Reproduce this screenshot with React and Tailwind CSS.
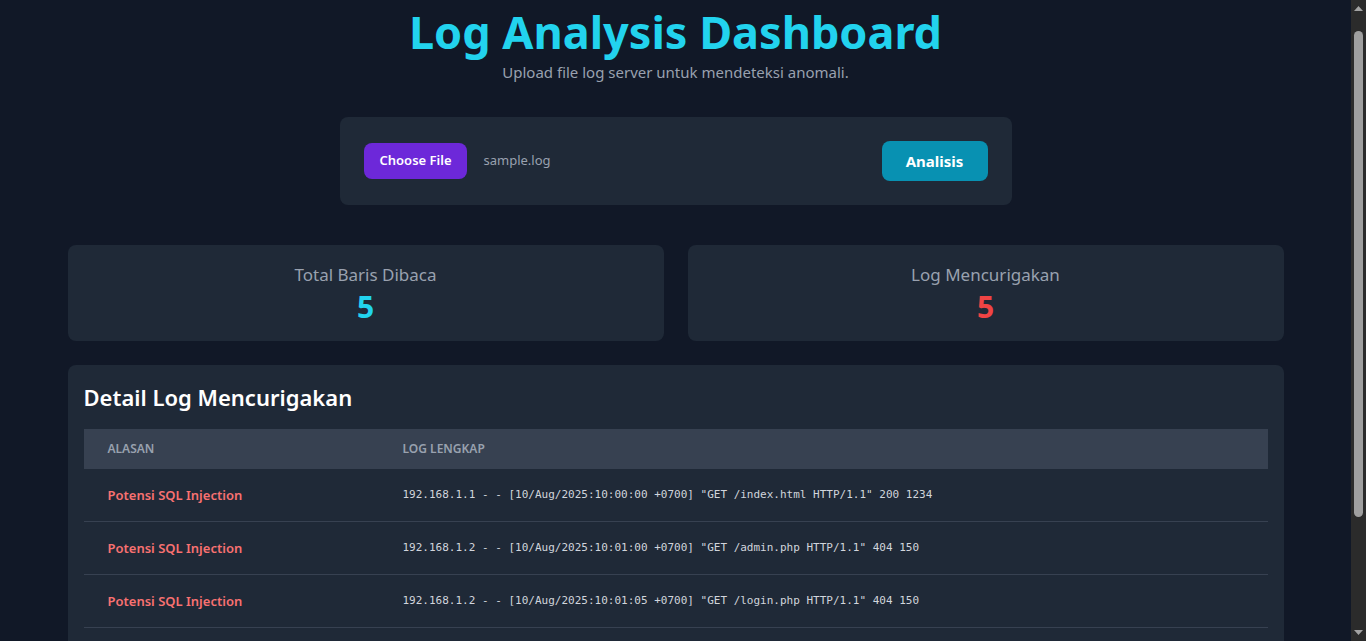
import React from "react";

const logs = [
  {
    reason: "Potensi SQL Injection",
    line: '192.168.1.1 - - [10/Aug/2025:10:00:00 +0700] "GET /index.html HTTP/1.1" 200 1234',
  },
  {
    reason: "Potensi SQL Injection",
    line: '192.168.1.2 - - [10/Aug/2025:10:01:00 +0700] "GET /admin.php HTTP/1.1" 404 150',
  },
  {
    reason: "Potensi SQL Injection",
    line: '192.168.1.2 - - [10/Aug/2025:10:01:05 +0700] "GET /login.php HTTP/1.1" 404 150',
  },
  {
    reason: "Potensi SQL Injection",
    line: '192.168.1.3 - - [10/Aug/2025:10:02:00 +0700] "GET /products.php?id=1 HTTP/1.1" 200 512',
  },
  {
    reason: "Potensi SQL Injection",
    line: '192.168.1.4 - - [10/Aug/2025:10:03:00 +0700] "POST /login.php HTTP/1.1" 500 89',
  },
];

// fake browser scrollbar, keeps the page centred like the screenshot
const Scrollbar = () => (
  <aside className="sticky top-0 h-screen w-[15px] shrink-0 bg-[#2b2b2b] flex flex-col">
    <div className="h-[17px] flex items-center justify-center">
      <svg width="9" height="5" viewBox="0 0 9 5">
        <path d="M4.5 0 L9 5 L0 5 Z" fill="#a3a3a3" />
      </svg>
    </div>
    <div className="flex-1 px-[3px] pt-[14px] pb-[107px]">
      <div className="h-full rounded-full bg-[#9f9f9f]" />
    </div>
    <div className="h-[17px] flex items-center justify-center">
      <svg width="9" height="5" viewBox="0 0 9 5">
        <path d="M0 0 L9 0 L4.5 5 Z" fill="#a3a3a3" />
      </svg>
    </div>
  </aside>
);

const App = () => {
  return (
    <div className="flex min-h-screen bg-[#111827] text-gray-200 font-['Noto_Sans',sans-serif]">
      <main className="flex-1 min-w-0">
        <div className="container mx-auto px-8 pt-1 pb-8">
          <header className="text-center">
            <h1 className="text-[45px] leading-[56px] font-bold text-[#22d3ee]">Log Analysis Dashboard</h1>
            <p className="text-[15px] leading-6 text-gray-400">Upload file log server untuk mendeteksi anomali.</p>
          </header>

          {/* upload */}
          <div className="max-w-2xl mx-auto mt-[33px] bg-[#1f2937] rounded-lg p-6 flex items-center justify-between">
            <div className="flex items-center">
              <button className="h-9 px-4 rounded-lg bg-[#6d28d9] text-white text-[13px] font-semibold">
                Choose File
              </button>
              <span className="ml-4 text-[13px] text-gray-400">sample.log</span>
            </div>
            <button className="h-10 w-[106px] rounded-lg bg-[#0891b2] text-white text-[15px] font-bold">
              Analisis
            </button>
          </div>

          {/* stats */}
          <div className="grid grid-cols-2 gap-6 mt-10">
            <div className="bg-[#1f2937] rounded-lg p-4 text-center">
              <p className="text-[17px] leading-7 text-gray-400">Total Baris Dibaca</p>
              <p className="text-3xl font-bold text-[#22d3ee]">5</p>
            </div>
            <div className="bg-[#1f2937] rounded-lg p-4 text-center">
              <p className="text-[17px] leading-7 text-gray-400">Log Mencurigakan</p>
              <p className="text-3xl font-bold text-[#ef4444]">5</p>
            </div>
          </div>

          {/* table */}
          <div className="bg-[#1f2937] rounded-lg p-4 mt-6">
            <h2 className="text-[22px] leading-8 font-semibold text-white mb-4">Detail Log Mencurigakan</h2>
            <table className="w-full text-left">
              <thead className="bg-[#374151]">
                <tr>
                  <th className="w-[295px] px-6 py-3 text-xs font-semibold uppercase text-gray-400">Alasan</th>
                  <th className="px-6 py-3 text-xs font-semibold uppercase text-gray-400">Log Lengkap</th>
                </tr>
              </thead>
              <tbody>
                {logs.map((item, index) => (
                  <tr key={index} className="border-b border-[#374151]">
                    <td className="px-6 py-4 text-[13px] leading-5 font-semibold text-[#f87171]">{item.reason}</td>
                    <td className="px-6 py-4 text-[11px] leading-5 text-gray-300 font-['DejaVu_Sans_Mono',monospace] whitespace-pre">
                      {item.line}
                    </td>
                  </tr>
                ))}
              </tbody>
            </table>
          </div>
        </div>
      </main>
      <Scrollbar />
    </div>
  );
};

export default App;
